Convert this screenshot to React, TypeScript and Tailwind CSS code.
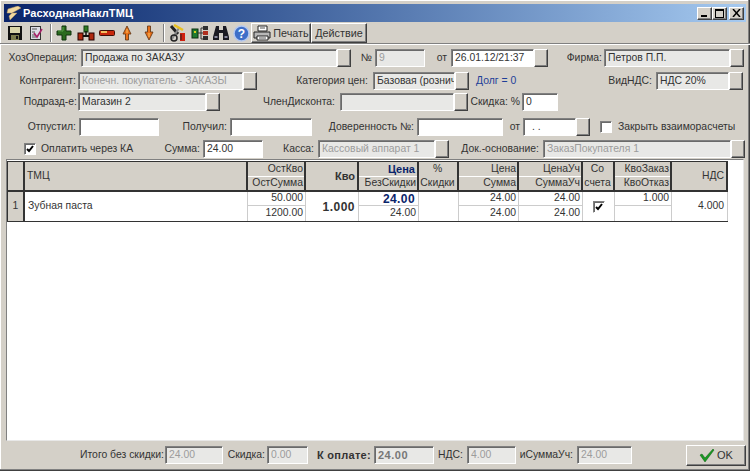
import type { ReactNode } from 'react';

const sunken = 'border border-t-[#808080] border-l-[#808080] border-r-white border-b-white shadow-[inset_1px_1px_0_#6a6a6a]';
const raised = 'border border-t-white border-l-white border-r-[#404040] border-b-[#404040] shadow-[inset_-1px_-1px_0_#808080]';

function Label({ className = '', children }: { className?: string; children: ReactNode }) {
  return <span className={`shrink-0 text-right whitespace-nowrap ${className}`}>{children}</span>;
}

function Field({ className = '', value = '', off = false, white = false }: { className?: string; value?: string; off?: boolean; white?: boolean }) {
  return (
    <div className={`shrink-0 h-[18px] flex items-center pl-[3px] whitespace-nowrap overflow-hidden ${sunken} ${white ? 'bg-white' : 'bg-[#e8e8e6]'} ${off ? 'text-[#9c9c9c]' : 'text-[#333]'} ${className}`}>
      {value}
    </div>
  );
}

function DropBtn() {
  return <div className={`shrink-0 w-[14px] h-[18px] bg-[#d4d0c8] ${raised}`} />;
}

function Check({ checked = false, className = '' }: { checked?: boolean; className?: string }) {
  return (
    <div className={`shrink-0 w-[12px] h-[12px] bg-white flex items-center justify-center ${sunken} ${className}`}>
      {checked && (
        <svg width="8" height="8" viewBox="0 0 8 8">
          <path d="M1 4l2 2 4-5" fill="none" stroke="#000" strokeWidth="2" />
        </svg>
      )}
    </div>
  );
}

function Floppy() {
  return (
    <svg width="16" height="16" viewBox="0 0 16 16">
      <rect x="1" y="1" width="14" height="14" fill="#111" />
      <rect x="3" y="2" width="10" height="6" fill="#d8d4a8" />
      <rect x="4" y="10" width="8" height="5" fill="#7a7a4a" />
      <rect x="9" y="11" width="2" height="3" fill="#111" />
    </svg>
  );
}

function DocCheck() {
  return (
    <svg width="16" height="16" viewBox="0 0 16 16">
      <rect x="2.5" y="1.5" width="10" height="13" fill="#dcdce4" stroke="#333" />
      <path d="M4 4h5M4 7h3M4 10h3M4 12h4" stroke="#555" />
      <path d="M6 8l3 4 5-8" fill="none" stroke="#a82068" strokeWidth="1.6" />
    </svg>
  );
}

function PlusIcon() {
  return (
    <svg width="16" height="16" viewBox="0 0 16 16">
      <path d="M6 1h4v5h5v4h-5v5H6v-5H1V6h5z" fill="#2a6a1e" stroke="#0f330c" />
      <path d="M7 2v4H2" fill="none" stroke="#5aa848" />
    </svg>
  );
}

function MoveIcon() {
  return (
    <svg width="18" height="16" viewBox="0 0 18 16">
      <rect x="7" y="1" width="4" height="6" fill="#2f7a22" stroke="#123d10" />
      <rect x="1" y="8" width="5" height="7" fill="#b02a10" stroke="#200" />
      <rect x="12" y="8" width="5" height="7" fill="#b02a10" stroke="#200" />
      <path d="M6 11h6" stroke="#111" strokeWidth="2" />
      <path d="M9 6v5" stroke="#111" strokeWidth="1.5" />
    </svg>
  );
}

function MinusIcon() {
  return (
    <svg width="16" height="16" viewBox="0 0 16 16">
      <rect x="0.5" y="5.5" width="15" height="5" rx="1" fill="#c8280c" stroke="#401008" />
      <rect x="2" y="6" width="6" height="2" fill="#f4c060" />
    </svg>
  );
}

function ArrowIcon({ down = false }: { down?: boolean }) {
  return (
    <svg width="12" height="16" viewBox="0 0 12 16">
      <g transform={down ? 'rotate(180 6 8)' : undefined}>
        <path d="M6 1l4 8H7.5v6h-3V9H2z" fill="#e8701a" stroke="#5a3010" strokeWidth="0.8" />
        <path d="M6 4v4" stroke="#f8c060" />
      </g>
    </svg>
  );
}

function ToolsIcon() {
  return (
    <svg width="18" height="18" viewBox="0 0 18 18">
      <path d="M2 2l7 8" stroke="#222" strokeWidth="3" />
      <path d="M3 15l7-11" stroke="#888" strokeWidth="2" />
      <path d="M5 1l9 5" stroke="#e8c020" strokeWidth="2.5" />
      <circle cx="5" cy="14" r="3" fill="none" stroke="#222" strokeWidth="1.5" />
      <rect x="11" y="9" width="5" height="8" fill="#d02010" />
      <path d="M12 10v6" stroke="#222" />
    </svg>
  );
}

function TreeIcon() {
  return (
    <svg width="18" height="16" viewBox="0 0 18 16">
      <rect x="1" y="4" width="6" height="9" fill="#1f7a30" stroke="#0a3010" />
      <rect x="3" y="6" width="2" height="2" fill="#d8d020" />
      <path d="M7 8h3M10 3v11M10 3h2M10 8h2M10 14h2" stroke="#333" />
      <rect x="12" y="1" width="5" height="4" fill="#303030" />
      <rect x="12" y="6" width="5" height="4" fill="#b03020" />
      <rect x="12" y="11" width="5" height="4" fill="#303030" />
    </svg>
  );
}

function BinocularsIcon() {
  return (
    <svg width="18" height="16" viewBox="0 0 18 16">
      <path d="M4 1h3v4h4V1h3l3 11v3h-6V8H7v7H1v-3z" fill="#1a1a22" />
      <rect x="2.5" y="11" width="3" height="2" fill="#8a8aa0" />
      <rect x="12.5" y="11" width="3" height="2" fill="#8a8aa0" />
    </svg>
  );
}

function HelpIcon() {
  return (
    <svg width="17" height="17" viewBox="0 0 17 17">
      <circle cx="8.5" cy="8.5" r="7.5" fill="#3f6fc8" stroke="#b4c8f0" strokeWidth="1.5" />
      <text x="8.5" y="13" textAnchor="middle" fontSize="12" fontWeight="700" fontFamily="Liberation Sans" fill="#fff">?</text>
    </svg>
  );
}

function PrinterIcon() {
  return (
    <svg width="18" height="16" viewBox="0 0 18 16">
      <path d="M5 1h9v5H5z" fill="#fff" stroke="#222" />
      <path d="M1 7h16v6H1z" fill="#b8b8b8" stroke="#222" />
      <path d="M4 11h11v4H4z" fill="#fff" stroke="#222" />
      <path d="M7 3h5M6 13h7" stroke="#555" />
    </svg>
  );
}

function TitleIcon() {
  return (
    <svg width="16" height="14" viewBox="0 0 16 14">
      <path d="M2 3l10-3 3 2-9 5 5 0-7 7-1-4 3-3-5 0z" fill="#f0d8a0" stroke="#b89860" strokeWidth="0.5" />
    </svg>
  );
}

function OkCheck() {
  return (
    <svg width="16" height="14" viewBox="0 0 16 14">
      <path d="M1 7l2-1 3 4 8-9 1 1-9 12z" fill="#1a9a22" stroke="#0a5a10" strokeWidth="0.5" />
    </svg>
  );
}

function Sep() {
  return <div className="shrink-0 w-[2px] h-[18px] border-l border-l-[#808080] border-r border-r-white" />;
}

function WinBtn({ children, className = '' }: { children: ReactNode; className?: string }) {
  return <div className={`w-[15px] h-[13px] bg-[#d4d0c8] flex items-center justify-center ${raised} ${className}`}>{children}</div>;
}

const head = 'bg-[#d4d0c8] border-r-2 border-r-[#333] flex items-center justify-end pr-[1px] whitespace-nowrap overflow-hidden';
const splitTop = 'shadow-[inset_0_-1px_0_#fff]';
const body = 'bg-white flex items-center justify-end pr-[2px] whitespace-nowrap overflow-hidden border-r border-r-[#ccc]';
const line = 'border-b border-b-[#ccc]';

function Table() {
  return (
    <div className="w-[721px] mt-[1px] grid grid-cols-[17px_223px_58px_53px_60px_40px_60px_64px_32px_57px_56px] grid-rows-[15px_15px_14px_15px] border-t border-t-[#333] border-l border-l-[#333] border-b border-b-[#333]">
      <div className={`${head} row-span-2 border-b-2 border-b-[#333]`} />
      <div className={`${head} row-span-2 border-b-2 border-b-[#333] justify-start pl-[2px]`}>ТМЦ</div>
      <div className={`${head} ${splitTop}`}>ОстКво</div>
      <div className={`${head} row-span-2 border-b-2 border-b-[#333] font-bold text-[11px] pr-[2px]`}>Кво</div>
      <div className={`${head} ${splitTop} font-bold text-[11px] text-[#0a246a] pr-[2px]`}>Цена</div>
      <div className={`${head} row-span-2 border-b-2 border-b-[#333] flex-col !items-center !justify-center leading-[14px] pr-0`}>
        <span>%</span>
        <span>Скидки</span>
      </div>
      <div className={`${head} ${splitTop}`}>Цена</div>
      <div className={`${head} ${splitTop}`}>ЦенаУч</div>
      <div className={`${head} row-span-2 border-b-2 border-b-[#333] flex-col !items-center !justify-center leading-[14px] pr-0`}>
        <span>Со</span>
        <span>счета</span>
      </div>
      <div className={`${head} ${splitTop}`}>КвоЗаказ</div>
      <div className={`${head} row-span-2 border-b-2 border-b-[#333] pr-[2px]`}>НДС</div>

      <div className={`${head} border-b-2 border-b-[#333]`}>ОстСумма</div>
      <div className={`${head} border-b-2 border-b-[#333]`}>БезСкидки</div>
      <div className={`${head} border-b-2 border-b-[#333]`}>Сумма</div>
      <div className={`${head} border-b-2 border-b-[#333]`}>СуммаУч</div>
      <div className={`${head} border-b-2 border-b-[#333]`}>КвоОтказ</div>

      <div className="row-span-2 bg-[#d4d0c8] border-r-2 border-r-[#333] flex items-center justify-center">1</div>
      <div className="row-span-2 bg-white flex items-center pl-[3px] border-r border-r-[#ccc]">Зубная паста</div>
      <div className={`${body} ${line}`}>50.000</div>
      <div className={`${body} row-span-2 font-bold text-[12px] tracking-[0.5px] pr-[3px]`}>1.000</div>
      <div className={`${body} ${line} font-bold text-[12px] tracking-[0.4px] text-[#0a246a] pr-[3px]`}>24.00</div>
      <div className={`${body} row-span-2`} />
      <div className={`${body} ${line}`}>24.00</div>
      <div className={`${body} ${line}`}>24.00</div>
      <div className={`${body} row-span-2 !justify-center !pr-0`}>
        <Check checked />
      </div>
      <div className={`${body} ${line}`}>1.000</div>
      <div className={`${body} row-span-2 pr-[3px]`}>4.000</div>

      <div className={body}>1200.00</div>
      <div className={body}>24.00</div>
      <div className={body}>24.00</div>
      <div className={body}>24.00</div>
      <div className={body} />
    </div>
  );
}

export default function App() {
  return (
    <div className="w-[750px] h-[471px] overflow-hidden bg-[#d4d0c8] text-[10.4px] leading-none text-[#333] flex flex-col pt-[4px] font-['Liberation_Sans',Arial,sans-serif] shadow-[inset_-1px_-1px_0_#404040,inset_-2px_-2px_0_#808080,inset_1px_1px_0_#fff]">
      {/* заголовок окна */}
      <div className="mx-[4px] w-[742px] h-[18px] shrink-0 flex items-center bg-gradient-to-r from-[#0a246a] to-[#a6caf0] pl-[2px] pr-[2px]">
        <TitleIcon />
        <span className="ml-[1px] text-white font-bold text-[11px] tracking-[0.1px]">РасходнаяНаклТМЦ</span>
        <div className="ml-auto flex text-black">
          <WinBtn><div className="w-[6px] h-[2px] bg-black mt-[6px] mr-[2px]" /></WinBtn>
          <WinBtn><div className="w-[9px] h-[9px] border border-black border-t-2" /></WinBtn>
          <WinBtn className="ml-[2px]">
            <svg width="9" height="8" viewBox="0 0 9 8"><path d="M1 0l7 8M8 0l-7 8" stroke="#000" strokeWidth="1.5" /></svg>
          </WinBtn>
        </div>
      </div>

      {/* панель инструментов */}
      <div className="h-[21px] shrink-0 flex items-center pl-[7px] mt-[1px] border-b border-b-[#808080] shadow-[0_1px_0_#fff]">
        <div className="w-[16px] flex justify-center"><Floppy /></div>
        <div className="w-[16px] ml-[5px] flex justify-center"><DocCheck /></div>
        <div className="ml-[6px]"><Sep /></div>
        <div className="w-[16px] ml-[4px] flex justify-center"><PlusIcon /></div>
        <div className="w-[18px] ml-[5px] flex justify-center"><MoveIcon /></div>
        <div className="w-[16px] ml-[4px] flex justify-center"><MinusIcon /></div>
        <div className="w-[12px] ml-[6px] flex justify-center"><ArrowIcon /></div>
        <div className="w-[12px] ml-[10px] flex justify-center"><ArrowIcon down /></div>
        <div className="ml-[8px]"><Sep /></div>
        <div className="w-[18px] ml-[4px] flex justify-center"><ToolsIcon /></div>
        <div className="w-[18px] ml-[4px] flex justify-center"><TreeIcon /></div>
        <div className="w-[18px] ml-[3px] flex justify-center"><BinocularsIcon /></div>
        <div className="w-[17px] ml-[3px] flex justify-center"><HelpIcon /></div>
        <div className={`ml-[1px] w-[60px] h-[20px] flex items-center justify-center gap-[2px] ${raised}`}>
          <PrinterIcon />
          <span className="text-[10.8px]">Печать</span>
        </div>
        <div className={`w-[56px] h-[20px] flex items-center justify-center text-[10.8px] ${raised}`}>Действие</div>
      </div>

      {/* поля шапки документа */}
      <div className="flex items-center h-[18px] mt-[5px] shrink-0">
        <Label className="w-[77px]">ХозОперация:</Label>
        <Field className="ml-[4px] w-[256px]" value="Продажа по ЗАКАЗУ" />
        <DropBtn />
        <Label className="w-[21px]">№</Label>
        <Field className="ml-[3px] w-[50px]" value="9" off />
        <Label className="w-[22px]">от</Label>
        <Field className="ml-[4px] w-[83px]" value="26.01.12/21:37" white />
        <DropBtn />
        <Label className="w-[54px]">Фирма:</Label>
        <Field className="ml-[2px] w-[126px]" value="Петров П.П." />
        <DropBtn />
      </div>

      <div className="flex items-center h-[18px] mt-[5px] shrink-0">
        <Label className="w-[76px]">Контрагент:</Label>
        <Field className="ml-[2px] w-[165px]" value="Конечн. покупатель - ЗАКАЗЫ" off />
        <DropBtn />
        <Label className="w-[111px]">Категория цен:</Label>
        <Field className="ml-[5px] w-[82px]" value="Базовая (рознич" />
        <DropBtn />
        <span className="ml-[7px] w-[41px] text-[#1f3f98] whitespace-nowrap">Долг = 0</span>
        <Label className="w-[135px]">ВидНДС:</Label>
        <Field className="ml-[4px] w-[73px]" value="НДС 20%" />
        <DropBtn />
      </div>

      <div className="flex items-center h-[18px] mt-[3px] shrink-0">
        <Label className="w-[77px]">Подразд-е:</Label>
        <Field className="ml-[1px] w-[128px]" value="Магазин 2" />
        <DropBtn />
        <Label className="w-[115px]">ЧленДисконта:</Label>
        <Field className="ml-[5px] w-[114px]" />
        <DropBtn />
        <Label className="w-[52px]">Скидка: %</Label>
        <Field className="ml-[2px] w-[36px]" value="0" white />
      </div>

      <div className="flex items-center h-[18px] mt-[7px] shrink-0">
        <Label className="w-[76px]">Отпустил:</Label>
        <Field className="ml-[3px] w-[80px]" white />
        <Label className="w-[68px]">Получил:</Label>
        <Field className="ml-[3px] w-[82px]" white />
        <Label className="w-[102px]">Доверенность №:</Label>
        <Field className="ml-[3px] w-[86px]" white />
        <Label className="w-[17px]">от</Label>
        <Field className="ml-[3px] w-[53px] pl-[8px]" value=". ." white />
        <DropBtn />
        <Check className="ml-[10px]" />
        <span className="ml-[6px] whitespace-nowrap">Закрыть взаиморасчеты</span>
      </div>

      <div className="flex items-center h-[18px] mt-[4px] shrink-0">
        <Check checked className="ml-[24px]" />
        <span className="ml-[5px] w-[89px] whitespace-nowrap">Оплатить через КА</span>
        <Label className="w-[70px]">Сумма:</Label>
        <Field className="ml-[3px] w-[60px]" value="24.00" white />
        <Label className="w-[51px]">Касса:</Label>
        <Field className="ml-[4px] w-[117px]" value="Кассовый аппарат 1" off />
        <DropBtn />
        <Label className="w-[90px]">Док.-основание:</Label>
        <Field className="ml-[4px] w-[188px]" value="ЗаказПокупателя 1" off />
        <DropBtn />
      </div>

      {/* таблица документа */}
      <div className="mt-[1px] ml-[6px] w-[738px] h-[282px] shrink-0 bg-white border-t border-t-[#808080] border-l border-l-[#808080] border-r border-r-[#e8e8e8] border-b border-b-[#e8e8e8]">
        <Table />
      </div>

      {/* итоги */}
      <div className="flex items-center h-[22px] mt-[3px] shrink-0">
        <Label className="w-[164px]">Итого без скидки:</Label>
        <Field className="ml-[1px] w-[58px]" value="24.00" off />
        <Label className="w-[42px]">Скидка:</Label>
        <Field className="ml-[2px] w-[41px]" value="0.00" off />
        <Label className="w-[63px] font-bold text-[11px] tracking-[0.3px]">К оплате:</Label>
        <Field className="ml-[3px] w-[60px] font-bold text-[11px] tracking-[0.5px] !text-[#777]" value="24.00" />
        <Label className="w-[29px]">НДС:</Label>
        <Field className="ml-[4px] w-[49px]" value="4.00" off />
        <Label className="w-[57px]">иСуммаУч:</Label>
        <Field className="ml-[4px] w-[55px]" value="24.00" off />
        <div className={`ml-[54px] w-[60px] h-[21px] flex items-center justify-center gap-[2px] ${raised}`}>
          <OkCheck />
          <span className="text-[11px]">OK</span>
        </div>
      </div>
    </div>
  );
}
